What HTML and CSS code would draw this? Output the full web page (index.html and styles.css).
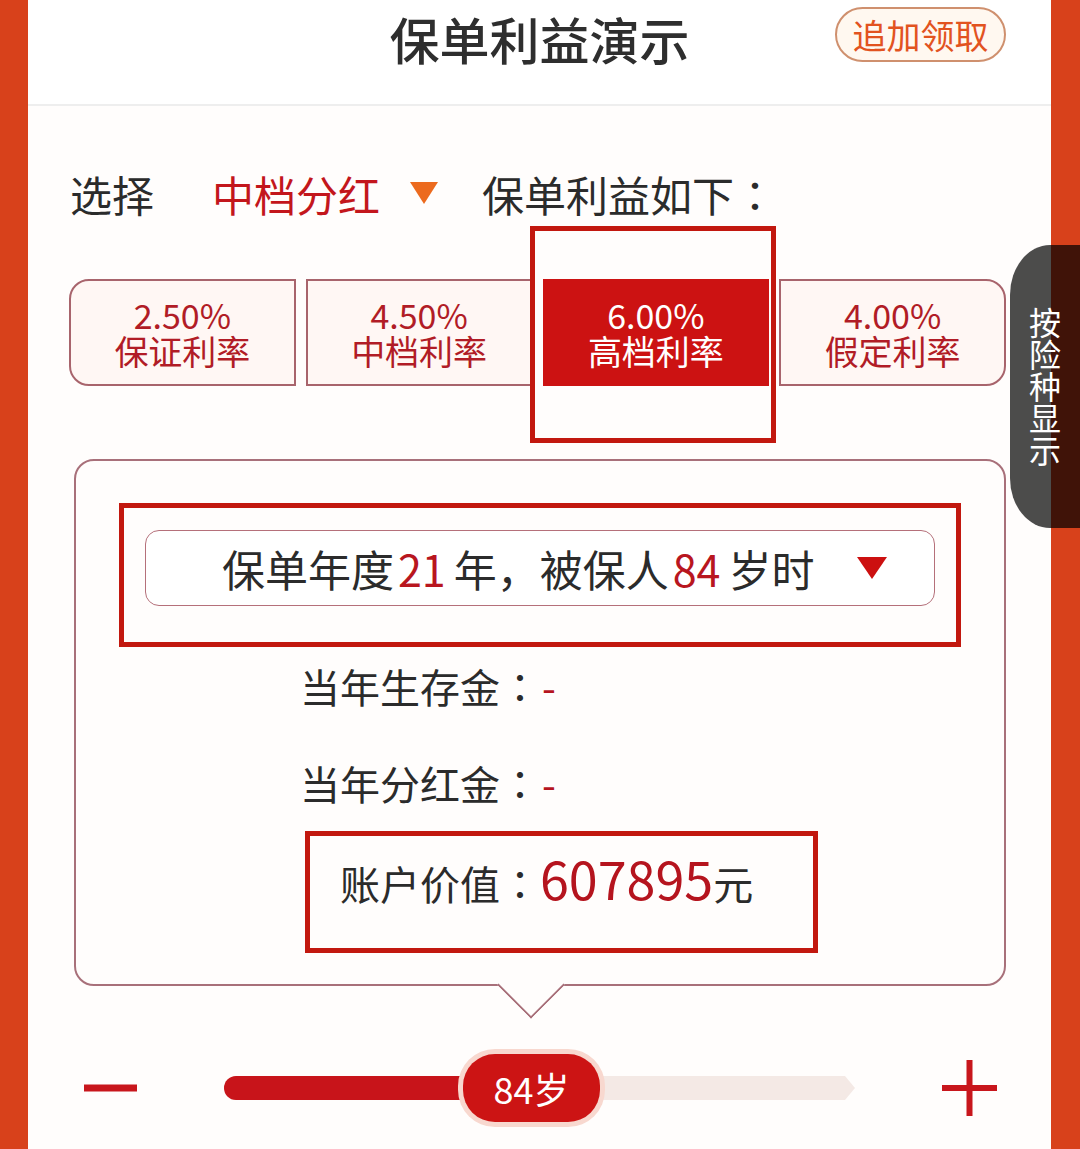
FILE: index.html
```html
<!DOCTYPE html>
<html>
<head>
    <meta charset="utf-8">
    <link rel="stylesheet" href="styles.css">
</head>
<body>
    <div class="screen">
        <div class="topbar">
            <h1>保单利益演示</h1>
            <button class="extra-btn">追加领取</button>
        </div>

        <div class="picker">
            <span class="picker-label">选择</span>
            <span class="picker-value">中档分红</span>
            <span class="picker-arrow"></span>
            <span class="picker-tail">保单利益如下<span class="colon">：</span></span>
        </div>

        <div class="rate-tabs">
            <div class="rate-tab"><span>2.50%</span><span>保证利率</span></div>
            <div class="rate-tab"><span>4.50%</span><span>中档利率</span></div>
            <div class="rate-tab active"><span>6.00%</span><span>高档利率</span></div>
            <div class="rate-tab"><span>4.00%</span><span>假定利率</span></div>
        </div>

        <div class="result-panel">
            <div class="mark mark-select">
                <div class="year-select">
                    <span class="year-text">保单年度<em>21</em>年，被保人<em>84</em>岁时</span>
                    <span class="select-arrow"></span>
                </div>
            </div>
            <div class="stats">
                <div class="stat-row">当年生存金<span class="colon">：</span><em>-</em></div>
                <div class="stat-row">当年分红金<span class="colon">：</span><em>-</em></div>
                <div class="mark mark-value">账户价值<span class="colon">：</span><em>607895</em>元</div>
            </div>
        </div>

        <div class="age-slider">
            <svg class="step" width="53" height="8" viewBox="0 0 53 8">
                <rect x="0" y="0.5" width="53" height="7" fill="#c8161c"/>
            </svg>
            <div class="track">
                <div class="track-fill" style="width: 246px"></div>
                <div class="thumb" style="left: 239px">84岁</div>
            </div>
            <svg class="step" width="55" height="56" viewBox="0 0 55 56">
                <path d="M0 28H55M27.5 0V56" stroke="#c8161c" stroke-width="6"/>
            </svg>
        </div>
    </div>

    <div class="side-tab">按险种显示</div>
</body>
</html>
```

FILE: styles.css
```css
body {
    margin: 0;
    padding: 0 29px 0 28px;
    background: #d8411b;
    font-family: "Noto Sans CJK SC", "Noto Sans", sans-serif;
    color: #2b2b2b;
}

.screen {
    background: #fffdfc;
    min-height: 1149px;
    overflow: hidden;
}

/* centred full-width colon */
.colon {
    font-family: "Noto Sans CJK TC", "Noto Sans CJK SC", sans-serif;
}

/* header */
.topbar {
    display: grid;
    grid-template-columns: 1fr auto 1fr;
    align-items: start;
    height: 106px;
    padding-top: 7px;
    box-sizing: border-box;
    border-bottom: 2px solid #eeeeee;
    background: #fff;
}

.topbar h1 {
    grid-column: 2;
    margin: 1px 0 0;
    font-size: 50px;
    line-height: 60px;
    font-weight: 500;
    color: #2e2e2e;
}

.extra-btn {
    justify-self: end;
    width: 171px;
    height: 55px;
    margin-right: 45px;
    border: 2px solid #cf906e;
    border-radius: 28px;
    background: #fff8f0;
    color: #e2531f;
    font-family: inherit;
    font-size: 34px;
    padding: 0;
    cursor: pointer;
}

/* dividend picker */
.picker {
    display: flex;
    align-items: center;
    height: 60px;
    margin-top: 57px;
    padding-left: 42px;
    font-size: 42px;
}

.picker-label {
    margin-right: 58px;
}

.picker-value {
    color: #c3161c;
    margin-right: 30px;
}

.picker-arrow {
    width: 0;
    height: 0;
    border-left: 14px solid transparent;
    border-right: 14px solid transparent;
    border-top: 22px solid #ec6a1e;
    margin-right: 44px;
}

/* rate tabs */
.rate-tabs {
    display: flex;
    gap: 10px;
    margin: 56px 45px 0 41px;
}

.rate-tab {
    flex: 1;
    height: 107px;
    box-sizing: border-box;
    border: 2px solid #a8646c;
    background: #fff7f4;
    color: #b11c26;
    display: flex;
    flex-direction: column;
    align-items: center;
    justify-content: center;
    font-size: 34px;
    line-height: 36px;
}

.rate-tab:first-child {
    border-radius: 20px 0 0 20px;
}

.rate-tab:last-child {
    border-radius: 0 20px 20px 0;
}

.rate-tab.active {
    position: relative;
    background: #cc1212;
    border-color: #cc1212;
    color: #fff;
}

.rate-tab.active::after {
    content: "";
    position: absolute;
    top: -55px;
    bottom: -59px;
    left: -15px;
    right: -9px;
    border: 5px solid #c2180f;
}

/* result panel */
.result-panel {
    position: relative;
    margin: 73px 45px 0 46px;
    border: 2px solid #a8707a;
    border-radius: 20px;
    padding: 42px 43px 31px;
    background: #fffdfc;
}

/* pointer under the panel, only the lower half of a turned square */
.result-panel::after {
    content: "";
    position: absolute;
    left: 431px;
    bottom: -25px;
    width: 48px;
    height: 48px;
    box-sizing: border-box;
    background: #fffdfc;
    border-right: 2px solid #a8707a;
    border-bottom: 2px solid #a8707a;
    transform: rotate(45deg);
    clip-path: polygon(100% -4px, 100% 100%, -4px 100%);
}

.mark {
    border: 5px solid #c2180f;
}

.mark-select {
    padding: 22px 21px 36px;
}

.year-select {
    display: flex;
    align-items: center;
    height: 76px;
    box-sizing: border-box;
    border: 1.5px solid #b5707a;
    border-radius: 14px;
    padding: 0 47px 0 76px;
    background: #fff;
    font-size: 43px;
}

.year-text em {
    font-style: normal;
    color: #b8161f;
    margin: 0 8px 0 4px;
}

.select-arrow {
    margin-left: auto;
    width: 0;
    height: 0;
    border-left: 15px solid transparent;
    border-right: 15px solid transparent;
    border-top: 22px solid #cc1010;
}

.stats {
    padding: 9px 0 0 181px;
}

.stat-row {
    font-size: 40px;
    line-height: 60px;
}

.stat-row + .stat-row {
    margin-top: 37px;
}

.stat-row em,
.mark-value em {
    font-style: normal;
    color: #b5141e;
}

.stat-row em {
    margin-left: 2px;
}

.mark-value {
    width: 513px;
    height: 122px;
    box-sizing: border-box;
    margin: 18px 0 0 5px;
    padding: 12px 0 0 30px;
    font-size: 40px;
    line-height: 60px;
}

.mark-value em {
    font-size: 52px;
}

/* age slider */
.age-slider {
    display: flex;
    align-items: center;
    height: 70px;
    margin-top: 67px;
    padding: 0 54px 0 56px;
}

.step {
    flex: none;
    display: block;
}

.track {
    position: relative;
    flex: 1;
    height: 24px;
    margin: 0 87px;
}

.track::before {
    content: "";
    position: absolute;
    inset: 0;
    background: #f4e9e5;
    border-radius: 12px 0 0 12px;
    clip-path: polygon(0 0, calc(100% - 10px) 0, 100% 50%, calc(100% - 10px) 100%, 0 100%);
}

.track-fill {
    position: relative;
    height: 100%;
    background: #c8141a;
    border-radius: 12px 0 0 12px;
}

.thumb {
    position: absolute;
    top: 50%;
    transform: translateY(-50%);
    width: 137px;
    height: 68px;
    border-radius: 32px;
    background: #cc1414;
    box-shadow: 0 0 0 5px #f8d8cf;
    color: #fff;
    font-size: 36px;
    display: flex;
    align-items: center;
    justify-content: center;
}

/* floating tab on the right edge */
.side-tab {
    position: absolute;
    top: 245px;
    right: 0;
    width: 70px;
    height: 283px;
    border-radius: 40px 0 0 40px / 50px 0 0 50px;
    background: rgba(0, 0, 0, 0.7);
    color: #fff;
    font-size: 32px;
    writing-mode: vertical-rl;
    display: flex;
    align-items: center;
    justify-content: center;
}
```
